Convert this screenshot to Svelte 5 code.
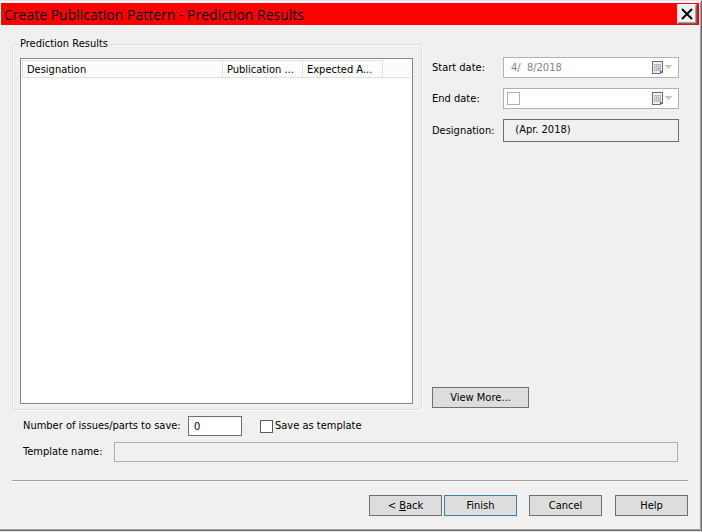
<script lang="ts">
	interface Column {
		label: string;
		width: number;
	}

	const columns: Column[] = [
		{ label: 'Designation', width: 200 },
		{ label: 'Publication ...', width: 80 },
		{ label: 'Expected A...', width: 80 }
	];

	let issueCount = $state('0');
	let saveAsTemplate = $state(false);
	let startDate = $state('4/  8/2018');
	let useEndDate = $state(false);
	let designation = $state('  (Apr. 2018)');
	let templateName = $state('');
</script>

{#snippet calendarIcon()}
	<svg class="calendar-icon" width="21" height="13" viewBox="0 0 21 13" shape-rendering="crispEdges" aria-hidden="true">
		<path d="M0 0h11v12H9v1H0z" fill="#766b6b" />
		<path d="M1 1h9v9H8v2H1z" fill="#f4f0ee" />
		<path d="M2 3h7v7H2z" fill="#b4b8c4" />
		<path d="M3 4h1v1H3zM5 4h1v1H5zM7 4h1v1H7zM3 6h1v1H3zM5 6h1v1H5zM7 6h1v1H7zM3 8h1v1H3zM5 8h1v1H5z" fill="#fff" />
		<path d="M8 10h2v1H9v1H8z" fill="#766b6b" />
		<path d="M13 4h7v1h-1v1h-1v1h-1v1h-1V7h-1V6h-1V5h-1z" fill="#c6c6c2" />
	</svg>
{/snippet}

<div class="window">
	<header class="title-bar">
		<h1>Create Publication Pattern - Prediction Results</h1>
		<button class="close" type="button" aria-label="Close">
			<svg width="12" height="12" viewBox="0 0 12 12" aria-hidden="true">
				<path d="M1 1l10 10M11 1L1 11" stroke="#000" stroke-width="2" fill="none" />
			</svg>
		</button>
	</header>

	<form class="content" onsubmit={(event) => event.preventDefault()}>
		<div class="main">
			<fieldset class="results">
				<legend>Prediction Results</legend>
				<div class="list">
					<table>
						<colgroup>
							{#each columns as column}
								<col style="width: {column.width}px" />
							{/each}
							<col />
						</colgroup>
						<thead>
							<tr>
								{#each columns as column}
									<th scope="col">{column.label}</th>
								{/each}
								<td></td>
							</tr>
						</thead>
						<tbody></tbody>
					</table>
				</div>
			</fieldset>

			<div class="side">
				<div class="fields">
					<label for="start-date">Start date:</label>
					<div class="date-box">
						<input id="start-date" type="text" bind:value={startDate} disabled />
						{@render calendarIcon()}
					</div>

					<label for="end-date">End date:</label>
					<div class="date-box">
						<input id="end-date" class="check muted" type="checkbox" bind:checked={useEndDate} disabled />
						{@render calendarIcon()}
					</div>

					<label for="designation">Designation:</label>
					<input id="designation" class="designation" type="text" bind:value={designation} readonly />
				</div>
				<button class="button view-more" type="button">View More...</button>
			</div>
		</div>

		<div class="options">
			<label class="count-label" for="issue-count">Number of issues/parts to save:</label>
			<input id="issue-count" class="count" type="text" bind:value={issueCount} />
			<input id="save-template" class="check" type="checkbox" bind:checked={saveAsTemplate} />
			<label for="save-template">Save as template</label>
		</div>

		<div class="template">
			<label for="template-name">Template name:</label>
			<input id="template-name" type="text" bind:value={templateName} disabled />
		</div>

		<footer>
			<button class="button" type="button">&lt; <u>B</u>ack</button>
			<button class="button default" type="submit">Finish</button>
			<button class="button spaced" type="button">Cancel</button>
			<button class="button help" type="button">Help</button>
		</footer>
	</form>
</div>

<style>
	:global(body) {
		margin: 0;
		background: #f0f0f0;
	}

	.window,
	.window * {
		box-sizing: border-box;
	}

	.window {
		display: flex;
		flex-direction: column;
		min-height: 100vh;
		padding: 2px 2px 2px 1px;
		border-top: 1px solid #e3e3e3;
		border-right: 1px solid #696969;
		border-bottom: 1px solid #e8e8e8;
		background: #f0f0f0;
		box-shadow:
			inset 0 1px #fff,
			inset -1px 0 #a0a0a0,
			inset 0 -1px #696969,
			inset 0 -2px #a0a0a0;
		color: #000;
		font-family: 'DejaVu Sans Condensed', 'DejaVu Sans', sans-serif;
		font-size: 11px;
		line-height: 14px;
	}

	button,
	input {
		margin: 0;
		color: inherit;
		font: inherit;
	}

	.title-bar {
		display: flex;
		align-items: center;
		justify-content: space-between;
		height: 22px;
		padding: 0 2px 0 3px;
		background: #f00;
	}

	h1 {
		margin: 0;
		padding-top: 2px;
		font-family: 'Open Sans', sans-serif;
		font-size: 14px;
		font-weight: 400;
		line-height: 20px;
		white-space: nowrap;
	}

	.close {
		display: flex;
		align-items: center;
		justify-content: center;
		width: 20px;
		height: 20px;
		padding: 0;
		border: 1px solid;
		border-color: #fff #696969 #696969 #fff;
		background: #f0f0f0;
		box-shadow: inset -1px -1px #a0a0a0;
	}

	.content {
		display: flex;
		flex: 1;
		flex-direction: column;
		padding: 12px 11px 13px;
	}

	.main {
		display: grid;
		flex: 1;
		grid-template-columns: minmax(0, 1fr) 247px;
		gap: 10px;
		padding-right: 9px;
	}

	.results {
		display: flex;
		flex-direction: column;
		min-width: 0;
		margin: 0;
		padding: 7px 8px 5px 7px;
		border: 1px solid #d5dfe5;
		border-radius: 3px;
		box-shadow:
			1px 1px #fff,
			inset 1px 1px #fff;
	}

	legend {
		margin-left: -2px;
		padding: 0 2px;
		background: #f0f0f0;
	}

	.list {
		flex: 1;
		padding: 1px;
		border: 1px solid #828790;
		background: #fff;
	}

	table {
		width: 100%;
		border-collapse: collapse;
		table-layout: fixed;
	}

	thead {
		background: #fcfcfc;
	}

	th,
	td {
		height: 17px;
		padding: 1px 0 0 4px;
		border: 1px solid #e0e0e0;
		font-weight: 400;
		text-align: left;
		white-space: nowrap;
	}

	td {
		border-right: 0;
		border-top: 0;
	}

	.side {
		display: flex;
		flex-direction: column;
		justify-content: space-between;
		padding: 20px 0 2px;
	}

	.fields {
		display: grid;
		grid-template-columns: 71px minmax(0, 1fr);
		align-items: center;
		row-gap: 10px;
	}

	.date-box {
		display: flex;
		align-items: center;
		justify-content: space-between;
		height: 21px;
		padding: 0 5px 0 3px;
		border: 1px solid #adb2b5;
		background: #fff;
	}

	.date-box input[type='text'] {
		width: 100%;
		padding: 1px 4px 0;
		border: 0;
		background: none;
		color: #838383;
		white-space: pre;
	}

	.calendar-icon {
		flex: none;
	}

	.designation {
		width: 100%;
		height: 23px;
		padding: 0 5px 2px;
		border: 1px solid #6d6d6d;
		background: #f0f0f0;
	}

	.check {
		width: 13px;
		height: 13px;
		border: 1px solid #5a5a5a;
		background: #fff;
		appearance: none;
	}

	.check:checked {
		background: #5a5a5a;
		box-shadow: inset 0 0 0 2px #fff;
	}

	.muted {
		border-color: #b0b0b0;
	}

	.button {
		width: 73px;
		height: 21px;
		padding: 1px 0 0;
		border: 1px solid #707070;
		background: #ddd;
		white-space: nowrap;
	}

	.view-more {
		width: 97px;
	}

	.options {
		display: flex;
		align-items: center;
		margin-top: 6px;
		padding-left: 11px;
	}

	.count-label {
		width: 165px;
	}

	.count {
		width: 54px;
		height: 20px;
		margin-right: 18px;
		padding: 0 5px;
		border: 1px solid #6d6d6d;
		background: #fff;
	}

	.options .check + label {
		padding-left: 2px;
	}

	.template {
		display: flex;
		align-items: center;
		margin-top: 6px;
		padding: 0 10px 0 11px;
	}

	.template label {
		width: 91px;
	}

	.template input {
		flex: 1;
		min-width: 0;
		height: 20px;
		padding: 0 5px;
		border: 1px solid #adb2b0;
		background: #f0f0f0;
	}

	footer {
		display: flex;
		justify-content: flex-end;
		margin-top: 18px;
		padding-top: 14px;
		border-top: 1px solid #a0a0a0;
		box-shadow: inset 0 1px #fff;
	}

	.default {
		margin-left: 2px;
		border-color: #3c7fb1;
	}

	.spaced {
		margin-left: 12px;
	}

	.help {
		margin-left: 13px;
	}
</style>
